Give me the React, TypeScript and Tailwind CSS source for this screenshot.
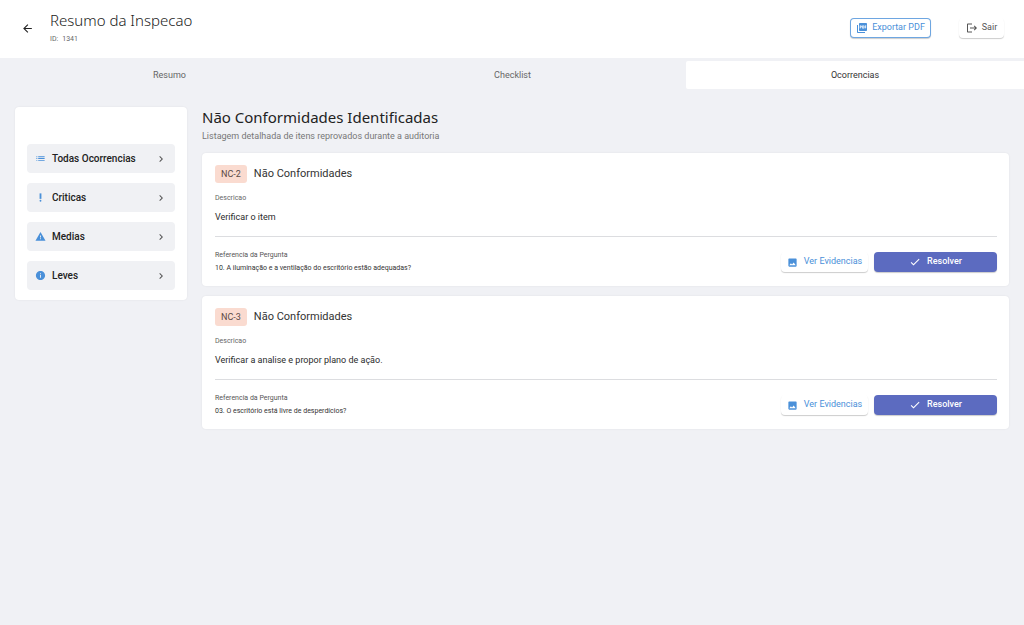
import React, { useState } from "react";
import {
  MdArrowBack,
  MdCheck,
  MdChevronRight,
  MdImage,
  MdInfo,
  MdList,
  MdLogout,
  MdPictureAsPdf,
  MdPriorityHigh,
  MdWarning,
} from "react-icons/md";

interface Occurrence {
  code: string;
  description: string;
  question: string;
}

const TABS = ["Resumo", "Checklist", "Ocorrencias"];

const FILTERS = [
  { label: "Todas Ocorrencias", icon: MdList },
  { label: "Criticas", icon: MdPriorityHigh },
  { label: "Medias", icon: MdWarning },
  { label: "Leves", icon: MdInfo },
];

const OCCURRENCES: Occurrence[] = [
  { code: "NC-2", description: "Verificar o item", question: "10. A iluminação e a ventilação do escritório estão adequadas?" },
  { code: "NC-3", description: "Verificar a analise e propor plano de ação.", question: "03. O escritório está livre de desperdícios?" },
];

function OccurrenceCard({ item }: { item: Occurrence }) {
  return (
    <article className="rounded-[4px] bg-white pt-3 pr-3 pb-[11px] pl-[13px] shadow-[0_0_2px_rgba(0,0,0,0.08)]">
      <div className="flex items-center gap-[7px]">
        <span className="flex h-[18px] items-center rounded-[3px] bg-[#fadbd0] px-[6px] pt-px text-[9px] text-[#5b4a46]">{item.code}</span>
        <h3 className="text-[11px] leading-[18px] text-[#333]">Não Conformidades</h3>
      </div>
      <p className="mt-2 text-[7px] leading-[14px] text-[#666]">Descricao</p>
      <p className="mt-[5px] text-[9px] leading-[14px] text-[#2b2b2b]">{item.description}</p>
      <hr className="mt-3 border-[#dcdde0]" />
      <div className="mt-3 flex items-center justify-between">
        <div className="text-[7px] leading-[13px]">
          <p className="text-[#555]">Referencia da Pergunta</p>
          <p className="text-[#333]">{item.question}</p>
        </div>
        <div className="flex gap-[6px]">
          <button className="flex h-5 w-[87px] items-center justify-center gap-[6px] rounded-[4px] bg-white text-[9px] text-[#4a90d9] shadow-[0_1px_1px_rgba(0,0,0,0.2)]">
            <MdImage size={11} /> Ver Evidencias
          </button>
          <button className="flex h-5 w-[123px] items-center justify-center gap-[6px] rounded-[4px] bg-[#5c6bc0] text-[9px] font-medium text-white shadow-[0_1px_1px_rgba(0,0,0,0.2)]">
            <MdCheck size={12} /> Resolver
          </button>
        </div>
      </div>
    </article>
  );
}

export default function App() {
  const [tab, setTab] = useState("Ocorrencias");

  return (
    <div className="min-h-screen bg-[#f0f1f5] font-['Roboto',sans-serif]">
      <header className="flex h-[58px] items-center justify-between bg-white pr-5 pb-[2px] pl-[21px]">
        <div className="flex items-center gap-4">
          <button aria-label="Voltar" className="text-[#222]">
            <MdArrowBack size={13} />
          </button>
          <div>
            <h1 className="font-['Noto_Sans',sans-serif] text-[15px] leading-[22px] font-light text-[#222]">Resumo da Inspecao</h1>
            <p className="flex gap-1 text-[7px] leading-[16px] text-[#666]">
              <span>ID:</span>
              <span>1341</span>
            </p>
          </div>
        </div>
        <div className="flex items-center gap-7">
          <button className="flex h-5 w-[81px] items-center justify-center gap-1 rounded-[4px] border border-[#4a90d9]/80 bg-white text-[9px] text-[#4a90d9] shadow-[0_1px_1px_rgba(0,0,0,0.2)]">
            <MdPictureAsPdf size={12} /> Exportar PDF
          </button>
          <button className="flex h-5 w-[45px] items-center justify-center gap-1 rounded-[4px] bg-white text-[9px] text-[#555] shadow-[0_1px_1px_rgba(0,0,0,0.2)]">
            <MdLogout size={12} /> Sair
          </button>
        </div>
      </header>

      {/* Tabs */}
      <nav className="grid grid-cols-[339fr_347fr_338fr] pt-[3px]">
        {TABS.map((name) => (
          <button key={name} onClick={() => setTab(name)}
            className={`h-7 rounded-l-[2px] pt-[2px] text-[9px] ${tab === name ? "bg-white text-[#333]" : "text-[#666]"}`}>
            {name}
          </button>
        ))}
      </nav>

      <main className="flex items-start gap-[15px] px-[15px] pt-[18px]">
        <aside className="w-[172px] shrink-0 rounded-[4px] bg-white px-3 pt-[37px] pb-[10px] shadow-[0_0_2px_rgba(0,0,0,0.08)]">
          <div className="flex flex-col gap-[10px]">
            {FILTERS.map(({ label, icon: Icon }) => (
              <button key={label} className="flex h-[29px] items-center rounded-[4px] bg-[#f0f1f4] px-2 text-[10px] font-medium text-[#222]">
                <Icon size={11} className="mr-[6px] text-[#4a90d9]" />
                {label}
                <MdChevronRight size={12} className="ml-auto text-[#555]" />
              </button>
            ))}
          </div>
        </aside>

        <section className="min-w-0 flex-1">
          <h2 className="font-['Noto_Sans',sans-serif] text-[15px] leading-[20px] text-[#222]">Não Conformidades Identificadas</h2>
          <p className="pt-[2px] text-[9px] leading-[14px] text-[#777]">Listagem detalhada de itens reprovados durante a auditoria</p>
          <div className="mt-[10px] flex flex-col gap-[10px]">
            {OCCURRENCES.map((item) => <OccurrenceCard key={item.code} item={item} />)}
          </div>
        </section>
      </main>
    </div>
  );
}
